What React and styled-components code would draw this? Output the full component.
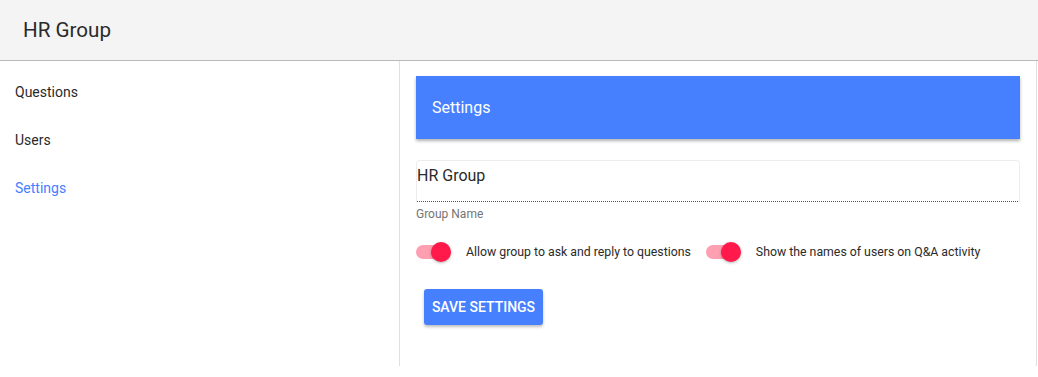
import React from 'react';
import styled, { createGlobalStyle } from 'styled-components';

const Global = createGlobalStyle`
  html, body { margin: 0; padding: 0; background: #fff; }
  body { font-family: Roboto, "Noto Sans", sans-serif; color: rgba(0,0,0,0.87); }
`;

const Page = styled.div`
  width: 1038px;
  height: 377px;
  display: flex;
  flex-direction: column;
  overflow: hidden;
`;

const Header = styled.header`
  height: 60px;
  flex: none;
  background: #f4f4f4;
  border-bottom: 1px solid #b9b9b9;
  display: flex;
  align-items: center;
  padding-left: 23px;
  font-size: 20.6px;
  color: #2a2a2a;
`;

const Body = styled.div`
  display: flex;
  height: 305px;
  width: 1037px;
`;

const Sidebar = styled.nav`
  flex: none;
  width: 399px;
  border-right: 1px solid #e0e0e0;
  padding-top: 7px;
  display: flex;
  flex-direction: column;
`;

const NavItem = styled.div`
  height: 48px;
  display: flex;
  align-items: center;
  padding-left: 15px;
  font-size: 14px;
  color: ${p => (p.$active ? '#4680ff' : '#2a2a2a')};
`;

const Main = styled.main`
  flex: 1;
  min-width: 0;
  border-right: 1px solid #e0e0e0;
  padding: 15px 16px 0 16px;
  display: flex;
  flex-direction: column;
`;

const Banner = styled.div`
  height: 63px;
  background: #4680ff;
  color: #fff;
  font-size: 16px;
  display: flex;
  align-items: center;
  padding-left: 16px;
  box-shadow: 0 2px 3px rgba(0, 0, 0, 0.3);
`;

const Field = styled.div`
  margin-top: 21px;
  display: flex;
  flex-direction: column;
`;

const InputBox = styled.div`
  height: 35px;
  border: 1px solid #ededed;
  border-bottom: none;
  border-radius: 4px 4px 0 0;
  padding-top: 5px;
  font-size: 16px;
  color: #2a2a2a;
  padding-bottom: 1px;
  background-image: linear-gradient(to right, #555 50%, transparent 50%);
  background-size: 2px 1px;
  background-repeat: repeat-x;
  background-position: bottom left;
`;

const HelperText = styled.div`
  margin-top: 5px;
  font-size: 12px;
  color: #757575;
`;

const ToggleRow = styled.div`
  margin-top: 24px;
  display: flex;
  align-items: center;
`;

const SwitchWrap = styled.label`
  display: flex;
  align-items: center;
  flex: none;
  white-space: nowrap;
  margin-right: 15px;
  font-size: 12.3px;
  color: #2a2a2a;
`;

const Track = styled.span`
  position: relative;
  width: 34px;
  height: 14px;
  border-radius: 7px;
  background: #ff9fb2;
  margin-right: 16px;
  flex: none;
`;

const Thumb = styled.span`
  position: absolute;
  top: -3px;
  left: 15px;
  width: 20px;
  height: 20px;
  border-radius: 50%;
  background: #ff1a4b;
  box-shadow: 0 1px 3px rgba(0, 0, 0, 0.3);
`;

const SaveButton = styled.button`
  margin: 30px 0 0 8px;
  align-self: flex-start;
  width: 119px;
  height: 36px;
  border: none;
  border-radius: 3px;
  background: #4680ff;
  color: #fff;
  font-family: Roboto, sans-serif;
  font-weight: 500;
  font-size: 14px;
  text-transform: uppercase;
  padding: 0;
  box-shadow: 0 2px 3px rgba(0, 0, 0, 0.25);
`;

function Toggle({ label }) {
  return (
    <SwitchWrap>
      <Track><Thumb /></Track>
      {label}
    </SwitchWrap>
  );
}

export default function App() {
  return (
    <Page>
      <Global />
      <Header>HR Group</Header>
      <Body>
        <Sidebar>
          <NavItem>Questions</NavItem>
          <NavItem>Users</NavItem>
          <NavItem $active>Settings</NavItem>
        </Sidebar>
        <Main>
          <Banner>Settings</Banner>
          <Field>
            <InputBox>HR Group</InputBox>
            <HelperText>Group Name</HelperText>
          </Field>
          <ToggleRow>
            <Toggle label="Allow group to ask and reply to questions" />
            <Toggle label="Show the names of users on Q&A activity" />
          </ToggleRow>
          <SaveButton>Save Settings</SaveButton>
        </Main>
      </Body>
    </Page>
  );
}
